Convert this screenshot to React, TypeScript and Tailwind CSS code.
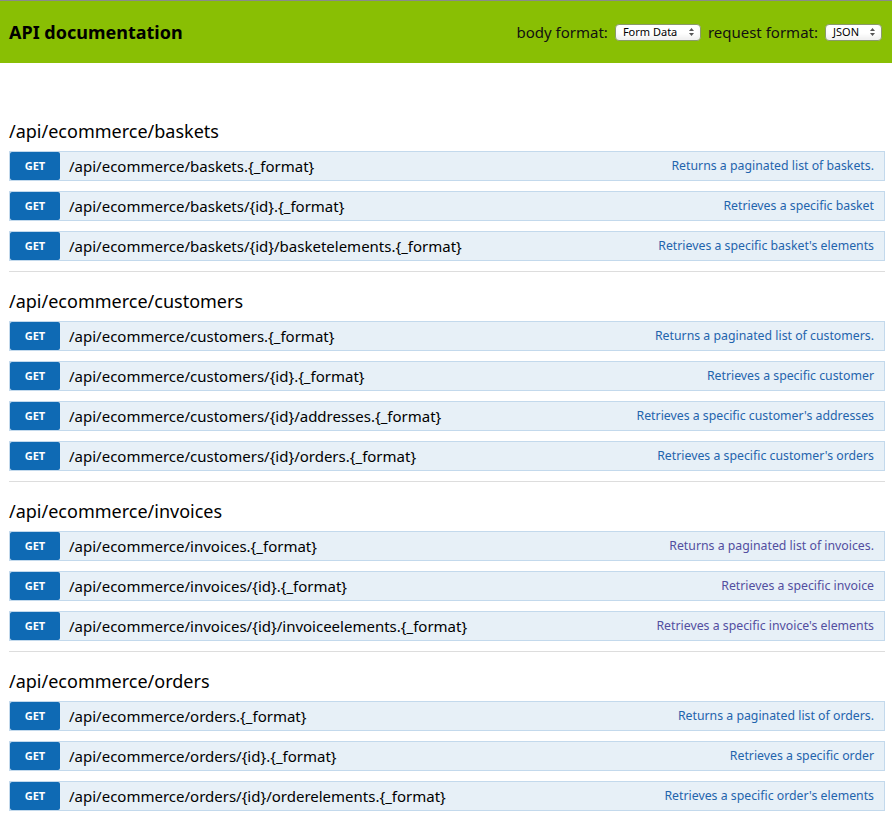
import { useState } from "react";

type Endpoint = { path: string; desc: string };
type Resource = { name: string; endpoints: Endpoint[]; visited?: boolean };

const resources: Resource[] = [
  {
    name: "/api/ecommerce/baskets",
    endpoints: [
      { path: "/api/ecommerce/baskets.{_format}", desc: "Returns a paginated list of baskets." },
      { path: "/api/ecommerce/baskets/{id}.{_format}", desc: "Retrieves a specific basket" },
      { path: "/api/ecommerce/baskets/{id}/basketelements.{_format}", desc: "Retrieves a specific basket's elements" },
    ],
  },
  {
    name: "/api/ecommerce/customers",
    endpoints: [
      { path: "/api/ecommerce/customers.{_format}", desc: "Returns a paginated list of customers." },
      { path: "/api/ecommerce/customers/{id}.{_format}", desc: "Retrieves a specific customer" },
      { path: "/api/ecommerce/customers/{id}/addresses.{_format}", desc: "Retrieves a specific customer's addresses" },
      { path: "/api/ecommerce/customers/{id}/orders.{_format}", desc: "Retrieves a specific customer's orders" },
    ],
  },
  {
    name: "/api/ecommerce/invoices",
    visited: true,
    endpoints: [
      { path: "/api/ecommerce/invoices.{_format}", desc: "Returns a paginated list of invoices." },
      { path: "/api/ecommerce/invoices/{id}.{_format}", desc: "Retrieves a specific invoice" },
      { path: "/api/ecommerce/invoices/{id}/invoiceelements.{_format}", desc: "Retrieves a specific invoice's elements" },
    ],
  },
  {
    name: "/api/ecommerce/orders",
    endpoints: [
      { path: "/api/ecommerce/orders.{_format}", desc: "Returns a paginated list of orders." },
      { path: "/api/ecommerce/orders/{id}.{_format}", desc: "Retrieves a specific order" },
      { path: "/api/ecommerce/orders/{id}/orderelements.{_format}", desc: "Retrieves a specific order's elements" },
    ],
  },
];

function Arrows() {
  return (
    <svg width="5" height="8" viewBox="0 0 5 8" className="ml-auto">
      <path d="M2.5 0 L5 3 L0 3 Z" fill="#555" />
      <path d="M2.5 8 L5 5 L0 5 Z" fill="#555" />
    </svg>
  );
}

function FakeSelect({ value, width }: { value: string; width: string }) {
  return (
    <div
      className={`${width} h-[17px] flex items-center pl-[7px] pr-[6px] bg-white border border-[#8a9a6a] rounded-[4px] text-[11px] text-black shadow-[inset_0_-4px_4px_rgba(0,0,0,0.06)]`}
    >
      <span>{value}</span>
      <Arrows />
    </div>
  );
}

function Row({ ep, visited }: { ep: Endpoint; visited?: boolean }) {
  return (
    <div className="h-[30px] flex items-center bg-[#e7f0f7] border border-[#c3d9ec] mb-[10px]">
      <span className="w-[50px] h-[28px] flex items-center justify-center bg-[#0f6ab4] rounded-[2px] text-white text-[11px] font-bold">
        GET
      </span>
      <span className="ml-[9px] text-[15px] text-black">{ep.path}</span>
      <span
        className={`ml-auto pr-[10px] text-[12.3px] ${visited ? "text-[#524ea0]" : "text-[#1f64ad]"}`}
      >
        {ep.desc}
      </span>
    </div>
  );
}

export default function App() {
  const [open] = useState(true);

  return (
    <div className="w-[892px] min-h-[821px] bg-white font-['Noto_Sans',sans-serif] text-black">
      <header className="h-[63px] bg-[#89bf04] border-t border-[#8a8a8a] flex items-center pl-[9px] pr-[10px]">
        <h1 className="text-[18px] font-bold leading-none">API documentation</h1>
        <div className="ml-auto flex items-center text-[15px] text-[#111] gap-[7px]">
          <span>body format:</span>
          <FakeSelect value="Form Data" width="w-[86px]" />
          <span>request format:</span>
          <FakeSelect value="JSON" width="w-[57px]" />
        </div>
      </header>

      {open && (
        <main className="pl-[9px] pr-[7px] pt-[56px]">
          {resources.map((r, i) => (
            <section key={r.name}>
              {i > 0 && <div className="h-px bg-[#dddddd] mb-[17px]" />}
              <h2 className="text-[18px] leading-[24px] mb-[8px]">{r.name}</h2>
              {r.endpoints.map((ep) => (
                <Row key={ep.path} ep={ep} visited={r.visited} />
              ))}
            </section>
          ))}
        </main>
      )}
    </div>
  );
}
